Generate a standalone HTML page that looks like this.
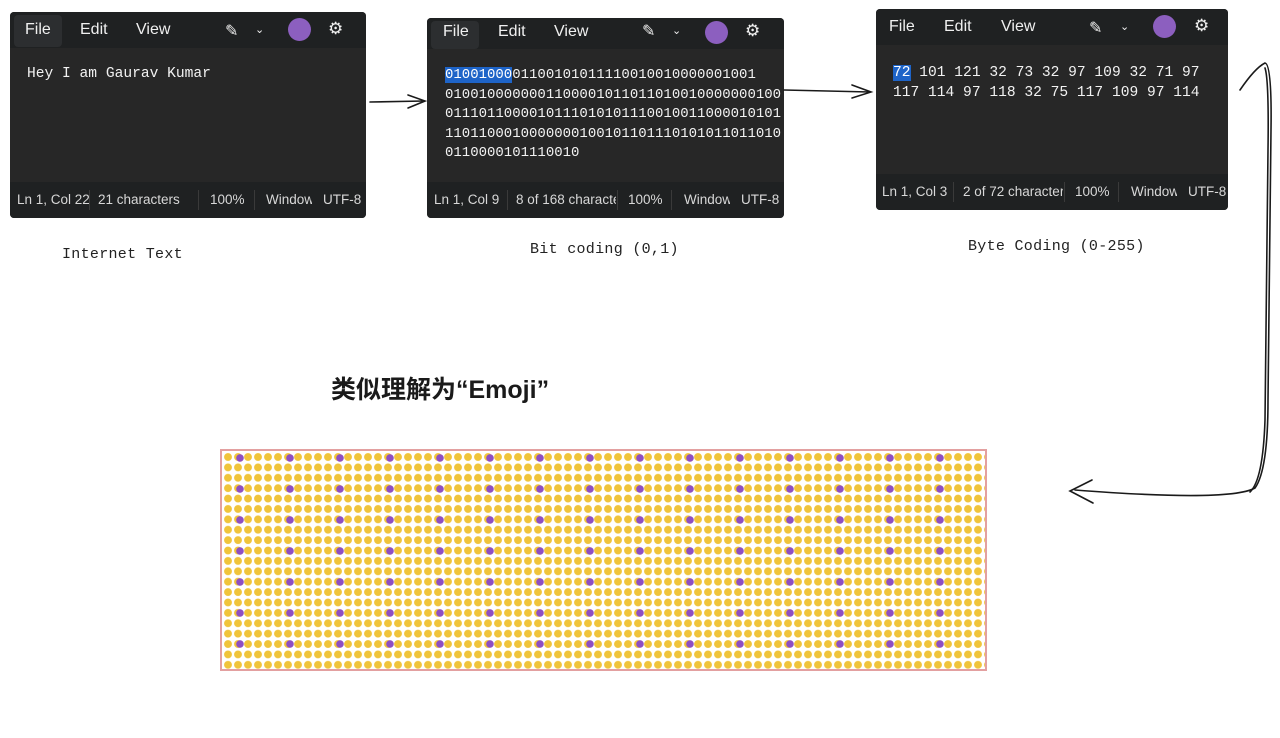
<!DOCTYPE html>
<html><head><meta charset="utf-8"><style>
*{margin:0;padding:0;box-sizing:border-box}
body{width:1280px;height:738px;background:#fff;position:relative;overflow:hidden;font-family:"Liberation Sans",sans-serif}
.win{position:absolute;background:#272727;border-radius:4px;overflow:hidden;color:#e8e8e8}
.tb{position:absolute;left:0;right:0;top:0;height:36px;background:#1f2122}
.tb span{position:absolute;top:9px;font-size:16px;color:#f0f0f0}
.fileb{position:absolute;left:4px;top:3px;width:48px;height:32px;background:#2c2e30;border-radius:4px}
.circ{position:absolute;top:6px;width:23px;height:23px;border-radius:50%;background:#8c5fbf}
.mono{position:absolute;font-family:"Liberation Mono",monospace;font-size:14.6px;line-height:19.5px;color:#f2f2f2;white-space:pre}
.sb{position:absolute;left:0;right:0;bottom:0;height:36px;background:#1f2122;font-size:13.5px;color:#d8d8d8}
.sb span{position:absolute;top:10px;white-space:nowrap;overflow:hidden}
.sep{position:absolute;top:8px;width:1px;height:20px;background:#3a3a3a}
.hand{position:absolute;font-family:"Liberation Mono",monospace;font-size:15px;color:#222;letter-spacing:0.3px}
.sel{background:#1e64c8;color:#fff}
.emoji{position:absolute;left:220px;top:449px;width:767px;height:222px;border:2px solid #e3a0a0;background-color:#fff;
background-image:
radial-gradient(circle at 5px 5px,#8e4fc2 0 3.5px,transparent 4px),
radial-gradient(circle at 5px 5px,#f0c43a 0 3.6px,transparent 4.2px);
background-size:50px 31px,10px 10.4px;background-position:13px 2px,1px 1px}
</style></head><body>

<div class="win" style="left:10px;top:12px;width:356px;height:206px">
 <div class="tb"><div class="fileb"></div><span style="left:15px">File</span><span style="left:70px">Edit</span><span style="left:126px">View</span>
 <span style="left:215px;font-size:16px">✎</span><span style="left:245px;font-size:11px;top:11px">⌄</span><div class="circ" style="left:278px"></div><span style="left:318px;font-size:17px;top:7px">⚙</span></div>
 <div class="mono" style="left:17px;top:53px">Hey I am Gaurav Kumar</div>
 <div class="sb"><span style="left:7px">Ln 1, Col 22</span><div class="sep" style="left:79px"></div><span style="left:88px">21 characters</span><div class="sep" style="left:188px"></div><span style="left:200px">100%</span><div class="sep" style="left:244px"></div><span style="left:256px;width:46px">Windows</span><span style="left:313px">UTF-8</span></div>
</div>

<div class="win" style="left:427px;top:18px;width:357px;height:200px">
 <div class="tb" style="height:31px"><div class="fileb" style="height:28px"></div><span style="left:16px;top:5px">File</span><span style="left:71px;top:5px">Edit</span><span style="left:127px;top:5px">View</span>
 <span style="left:215px;top:3px;font-size:16px">✎</span><span style="left:245px;font-size:11px;top:6px">⌄</span><div class="circ" style="left:278px;top:3px"></div><span style="left:318px;font-size:17px;top:3px">⚙</span></div>
 <div class="mono" style="left:18px;top:48px;font-size:14px"><span class="sel">01001000</span>01100101011110010010000001001
0100100000001100001011011010010000000100
0111011000010111010101110010011000010101
1101100010000000100101101110101011011010
0110000101110010</div>
 <div class="sb"><span style="left:7px">Ln 1, Col 9</span><div class="sep" style="left:80px"></div><span style="left:89px;width:100px">8 of 168 characters</span><div class="sep" style="left:190px"></div><span style="left:201px">100%</span><div class="sep" style="left:244px"></div><span style="left:257px;width:46px">Windows</span><span style="left:314px">UTF-8</span></div>
</div>

<div class="win" style="left:876px;top:9px;width:352px;height:201px">
 <div class="tb"><span style="left:13px">File</span><span style="left:68px">Edit</span><span style="left:125px">View</span>
 <span style="left:213px;font-size:16px">✎</span><span style="left:244px;font-size:11px;top:11px">⌄</span><div class="circ" style="left:277px"></div><span style="left:318px;font-size:17px;top:7px">⚙</span></div>
 <div class="mono" style="left:17px;top:55px"><span class="sel">72</span> 101 121 32 73 32 97 109 32 71 97
117 114 97 118 32 75 117 109 97 114</div>
 <div class="sb"><span style="left:6px">Ln 1, Col 3</span><div class="sep" style="left:77px"></div><span style="left:87px;width:100px">2 of 72 characters</span><div class="sep" style="left:188px"></div><span style="left:199px">100%</span><div class="sep" style="left:242px"></div><span style="left:255px;width:46px">Windows</span><span style="left:312px">UTF-8</span></div>
</div>

<div class="hand" style="left:62px;top:246px">Internet Text</div>
<div class="hand" style="left:530px;top:241px">Bit coding (0,1)</div>
<div class="hand" style="left:968px;top:238px">Byte Coding (0-255)</div>

<div style="position:absolute;left:331px;top:370px;font-size:25px;font-weight:bold;color:#1a1a1a;font-family:'Liberation Sans','Noto Sans CJK SC',sans-serif">类似理解为“Emoji”</div>

<div class="emoji"></div>

<svg style="position:absolute;left:0;top:0" width="1280" height="738" fill="none" stroke="#1a1a1a" stroke-width="1.6" stroke-linecap="round">
 <path d="M370 102 L424 101"/><path d="M408 95 L425 101 L408 108"/>
 <path d="M784 90 L870 92"/><path d="M852 85 L871 92 L852 98"/>
 <path d="M1240 90 Q1255 68 1265 63 Q1272 64 1271 130 L1268 400 Q1268 470 1255 488 Q1230 502 1075 490"/>
 <path d="M1265 68 Q1269 80 1268 150 L1265 420 Q1263 480 1250 492"/>
 <path d="M1092 480 L1070 491 L1093 503"/>
</svg>
</body></html>
